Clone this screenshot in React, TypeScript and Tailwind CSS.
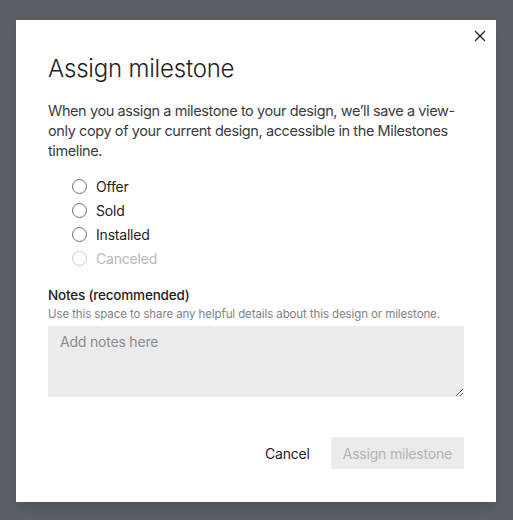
import { X } from 'lucide-react';

const options = [
  { label: 'Offer', disabled: false },
  { label: 'Sold', disabled: false },
  { label: 'Installed', disabled: false },
  { label: 'Canceled', disabled: true },
];

const App = () => {
  return (
    <div
      className="flex h-[520px] w-[513px] items-start bg-[#5b5f66] pl-4 pt-5"
      style={{ fontFamily: 'Inter, "Noto Sans", sans-serif' }}
    >
      <div className="relative flex h-[482px] w-[480px] flex-col bg-white px-8 pt-[34px] shadow-lg">
        <button className="absolute right-[3px] top-[3px] p-1 text-[#222]">
          <X size={18} strokeWidth={1.8} />
        </button>

        <h1 className="text-[24px] font-light leading-[30px] tracking-[-0.2px] text-[#1f2124]">
          Assign milestone
        </h1>

        <p className="mt-[17px] text-[14.5px] leading-[20px] tracking-[-0.4px] text-[#3a3c40]">
          When you assign a milestone to your design, we’ll save a view-only
          copy of your current design, accessible in the Milestones timeline.
        </p>

        <div className="mt-[13px] flex flex-col pl-6">
          {options.map((o) => (
            <label
              key={o.label}
              className={`flex h-6 items-center gap-[9px] text-[14px] tracking-[-0.2px] ${
                o.disabled ? 'text-[#b8b9bb]' : 'text-[#1f2124]'
              }`}
            >
              <span
                className={`h-[15px] w-[15px] rounded-full border ${
                  o.disabled ? 'border-[#c9cacc]' : 'border-[#6c6f75]'
                }`}
              />
              {o.label}
            </label>
          ))}
        </div>

        <div className="mt-[15px] text-[13.5px] font-medium leading-[20px] tracking-[-0.2px] text-[#1f2124]">
          Notes (recommended)
        </div>
        <div className="text-[11.5px] leading-[18px] tracking-[-0.1px] text-[#808287]">
          Use this space to share any helpful details about this design or milestone.
        </div>
        <textarea
          placeholder="Add notes here"
          className="mt-[3px] h-[71px] w-full bg-[#ebebeb] px-3 py-[6px] text-[14px] leading-[20px] tracking-[-0.2px] text-[#1f2124] outline-none placeholder:text-[#8a8c90]"
        />

        <div className="mt-[40px] flex items-center justify-end gap-[21px]">
          <button className="text-[14px] tracking-[-0.2px] text-[#1f2124]">Cancel</button>
          <button
            disabled
            className="h-8 bg-[#ebebeb] px-3 text-[14px] tracking-[-0.2px] text-[#b3b4b6]"
          >
            Assign milestone
          </button>
        </div>
      </div>
    </div>
  );
};

export default App;
